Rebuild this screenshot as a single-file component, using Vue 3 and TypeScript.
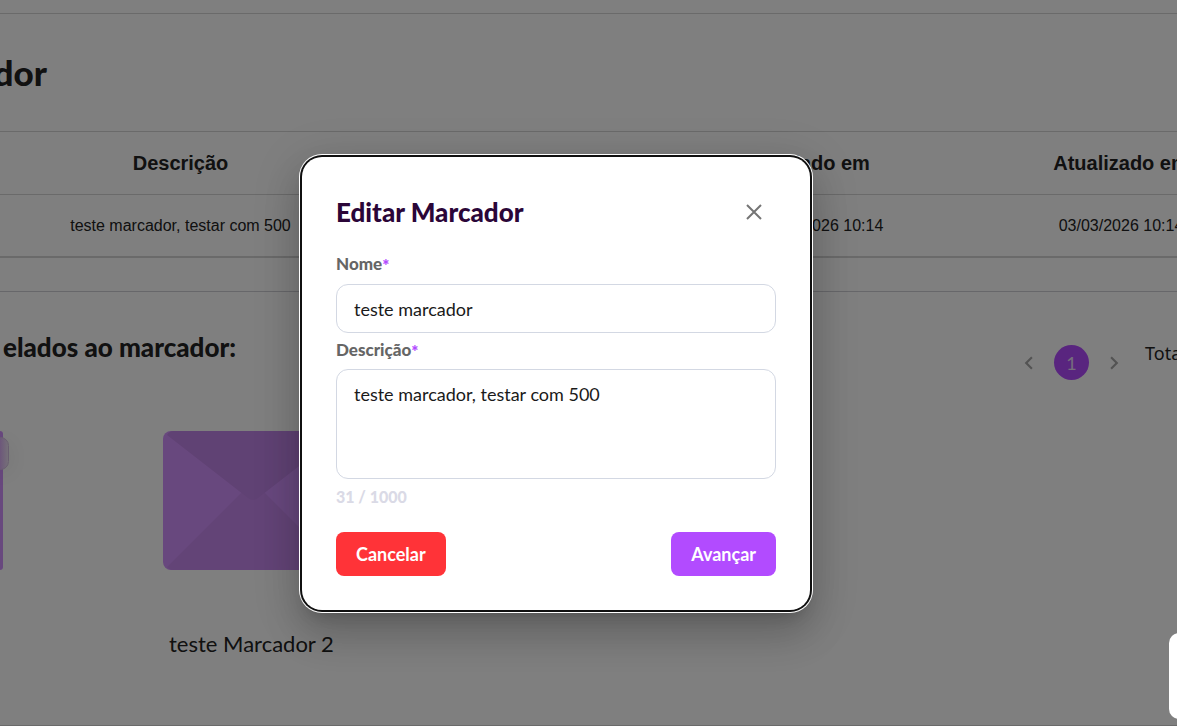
<script setup lang="ts">
import { computed, ref } from 'vue'

interface Column {
  key: string
  label: string
}

const columns: Column[] = [
  { key: 'description', label: 'Descrição' },
  { key: 'spacer', label: '' },
  { key: 'created', label: 'Criado em' },
  { key: 'updated', label: 'Atualizado em' },
]
const row: Record<string, string> = {
  description: 'teste marcador, testar com 500',
  spacer: '',
  created: '03/03/2026 10:14',
  updated: '03/03/2026 10:14',
}

const open = ref(true)
const name = ref('teste marcador')
const description = ref('teste marcador, testar com 500')
const limit = 1000
const counter = computed(() => `${description.value.length + 1} / ${limit}`)
</script>

<template>
  <div class="screen">
    <main class="page">
      <div class="topbar"></div>
      <header class="heading"><h1>dor</h1></header>
      <table class="grid">
        <thead>
          <tr>
            <th v-for="c in columns" :key="c.key" :class="c.key" scope="col">{{ c.label }}</th>
          </tr>
        </thead>
        <tbody>
          <tr>
            <td v-for="c in columns" :key="c.key">{{ row[c.key] }}</td>
          </tr>
        </tbody>
      </table>
      <div class="strip"></div>
      <section class="related">
        <div class="related-head">
          <h2>elados ao marcador:</h2>
          <nav class="pager" aria-label="Paginação">
            <button type="button" class="arrow" aria-label="Anterior">
              <svg viewBox="0 0 24 24"><path d="M15.4 7.4 14 6l-6 6 6 6 1.4-1.4L10.8 12z" /></svg>
            </button>
            <button type="button" class="current">1</button>
            <button type="button" class="arrow" aria-label="Próxima">
              <svg viewBox="0 0 24 24"><path d="M10 6 8.6 7.4l4.6 4.6-4.6 4.6L10 18l6-6z" /></svg>
            </button>
            <span class="total">Total</span>
          </nav>
        </div>
        <div class="cards">
          <div class="edge-card"><span class="chip"></span></div>
          <article class="card">
            <svg class="envelope" viewBox="0 0 180 139" aria-hidden="true">
              <rect width="180" height="139" rx="8" fill="#d191fd" />
              <path d="M4 136 78 62h24l74 74q-2 3-6 3H10q-4 0-6-3z" fill="#c788ef" />
              <path d="M4 4q2-4 7-4h158q5 0 7 4L95 67q-5 4-10 0z" fill="#c184e8" />
            </svg>
            <p>teste Marcador 2</p>
          </article>
        </div>
      </section>
      <div class="bottom-line"></div>
    </main>

    <div v-if="open" class="overlay">
      <form class="modal" role="dialog" aria-labelledby="modal-title" @submit.prevent>
        <div class="modal-head">
          <h2 id="modal-title">Editar Marcador</h2>
          <button type="button" class="close" aria-label="Fechar" @click="open = false">
            <svg viewBox="0 0 16 16"><path d="M1 1l14 14M15 1 1 15" /></svg>
          </button>
        </div>
        <label for="name">Nome<span>*</span></label>
        <input id="name" v-model="name" type="text" />
        <label for="description">Descrição<span>*</span></label>
        <textarea id="description" v-model="description"></textarea>
        <div class="counter">{{ counter }}</div>
        <div class="actions">
          <button type="button" class="cancel" @click="open = false">Cancelar</button>
          <button type="submit" class="next">Avançar</button>
        </div>
      </form>
    </div>
    <div class="widget"></div>
  </div>
</template>

<style>
html,
body {
  height: 100%;
  margin: 0;
  overflow: hidden;
}
</style>

<style scoped>
* {
  box-sizing: border-box;
}
.screen {
  position: relative;
  height: 100vh;
  overflow: hidden;
  background: #fff;
  color: #222;
  font-family: Lato, 'Open Sans', sans-serif;
}
h1,
h2,
p {
  margin: 0;
}
h1,
h2 {
  font-weight: 900;
}
button {
  border: 0;
  padding: 0;
  cursor: pointer;
}
.page {
  display: flex;
  flex-direction: column;
  height: 100%;
  overflow: hidden;
}
.topbar {
  height: 14px;
  border-bottom: 1px solid #d4d4d4;
  flex: none;
}
.heading {
  display: flex;
  justify-content: flex-end;
  align-items: center;
  width: 47px;
  height: 117px;
  padding-bottom: 2px;
  flex: none;
}
.heading h1 {
  font-size: 35px;
  line-height: 44px;
}
.grid {
  width: calc(100% + 94px);
  table-layout: fixed;
  border-collapse: separate;
  border-spacing: 0;
  border-bottom: 1px solid #d4d4d4;
  font-family: 'Liberation Sans', Arial, sans-serif;
  text-align: center;
}
.grid th,
.grid td {
  height: 63px;
  padding: 0;
  border-top: 1px solid #d4d4d4;
}
.grid th {
  font-size: 20px;
}
.grid td {
  font-size: 16px;
  border-bottom: 1px solid #d4d4d4;
}
.description {
  width: 361px;
}
.created,
.updated {
  width: 300px;
}
.strip {
  height: 34px;
  border-bottom: 1px solid #cfcfd4;
  flex: none;
}
.related {
  flex: 1;
}
.related-head {
  display: flex;
  justify-content: space-between;
  height: 139px;
}
.related-head h2 {
  display: flex;
  justify-content: flex-end;
  width: 236px;
  padding-top: 39px;
  font-size: 26px;
  line-height: 32px;
  white-space: nowrap;
}
.pager {
  display: flex;
  align-items: center;
  gap: 12px;
  width: 161px;
  height: 35px;
  margin-top: 53px;
  flex: none;
}
.pager button {
  flex: none;
}
.arrow {
  width: 26px;
  height: 26px;
  background: none;
}
.arrow svg {
  display: block;
  width: 26px;
  height: 26px;
  fill: #a6a6a6;
}
.current {
  width: 35px;
  height: 35px;
  border-radius: 50%;
  background: #b24bff;
  color: #eadcf8;
  font: 400 18px Lato, sans-serif;
}
.total {
  margin-left: 6px;
  padding-bottom: 20px;
  font: 18px/24px 'Noto Sans', sans-serif;
}
.cards {
  display: flex;
  gap: 160px;
}
.edge-card {
  position: relative;
  width: 3px;
  height: 139px;
  border-radius: 0 8px 8px 0;
  background: #d191fd;
}
.chip {
  position: absolute;
  top: 6px;
  left: -8px;
  width: 17px;
  height: 33px;
  border: 1px solid #d3bfe0;
  border-radius: 9px;
  background: linear-gradient(90deg, #d8a8f5 40%, #ebe0f2);
  box-shadow: 0 4px 24px rgba(0, 0, 0, 0.1);
}
.card {
  width: 180px;
}
.envelope {
  display: block;
  width: 180px;
  height: 139px;
}
.card p {
  padding: 60px 0 0 6px;
  font-size: 22px;
  line-height: 28px;
  white-space: nowrap;
}
.bottom-line {
  height: 1px;
  background: #d4d4d4;
  flex: none;
}
.overlay {
  position: absolute;
  inset: 0;
  display: flex;
  align-items: center;
  justify-content: center;
  padding: 41px 65px 0 0;
  background: rgba(0, 0, 0, 0.5);
}
.modal {
  display: flex;
  flex-direction: column;
  width: 508px;
  padding: 34px;
  border-radius: 20px;
  background: #fff;
  box-shadow:
    0 0 0 2px #101010,
    0 0 0 3px #fff,
    0 11px 15px -7px rgba(0, 0, 0, 0.2),
    0 24px 38px 3px rgba(0, 0, 0, 0.14),
    0 9px 46px 8px rgba(0, 0, 0, 0.12);
}
.modal-head {
  display: flex;
  align-items: center;
  justify-content: space-between;
  height: 42px;
  margin-bottom: 19px;
}
.modal-head h2 {
  color: #2b0638;
  font-size: 26px;
  line-height: 32px;
}
.close {
  display: grid;
  place-items: center;
  width: 44px;
  height: 42px;
  background: none;
}
.close svg {
  width: 16px;
  height: 16px;
  fill: none;
  stroke: #757575;
  stroke-width: 2;
}
label {
  height: 24px;
  color: #666;
  font-size: 17px;
  font-weight: 900;
  line-height: 24px;
}
label span {
  color: #b24bff;
  line-height: 1;
  vertical-align: middle;
}
input,
textarea {
  display: block;
  width: 100%;
  border: 1px solid #d3d8e3;
  border-radius: 12px;
  background: #fff;
  color: #1a1a1a;
  font: 18px/24px Lato, sans-serif;
  outline: 0;
  resize: none;
}
input {
  height: 49px;
  margin: 8px 0 5px;
  padding: 0 17px;
}
textarea {
  height: 110px;
  margin-top: 7px;
  padding: 12px 17px;
}
.counter {
  margin-top: 6px;
  color: #dadae6;
  font-size: 16px;
  font-weight: 900;
  line-height: 24px;
}
.actions {
  display: flex;
  justify-content: space-between;
  margin-top: 23px;
}
.actions button {
  height: 44px;
  padding: 0 20px;
  border-radius: 8px;
  color: #fff;
  font: 700 18px Lato, sans-serif;
}
.actions .cancel {
  background: #ff3338;
}
.actions .next {
  background: #b24bff;
}
.widget {
  position: absolute;
  right: -12px;
  bottom: 7px;
  width: 20px;
  height: 86px;
  border-radius: 12px;
  background: #fff;
}
</style>
